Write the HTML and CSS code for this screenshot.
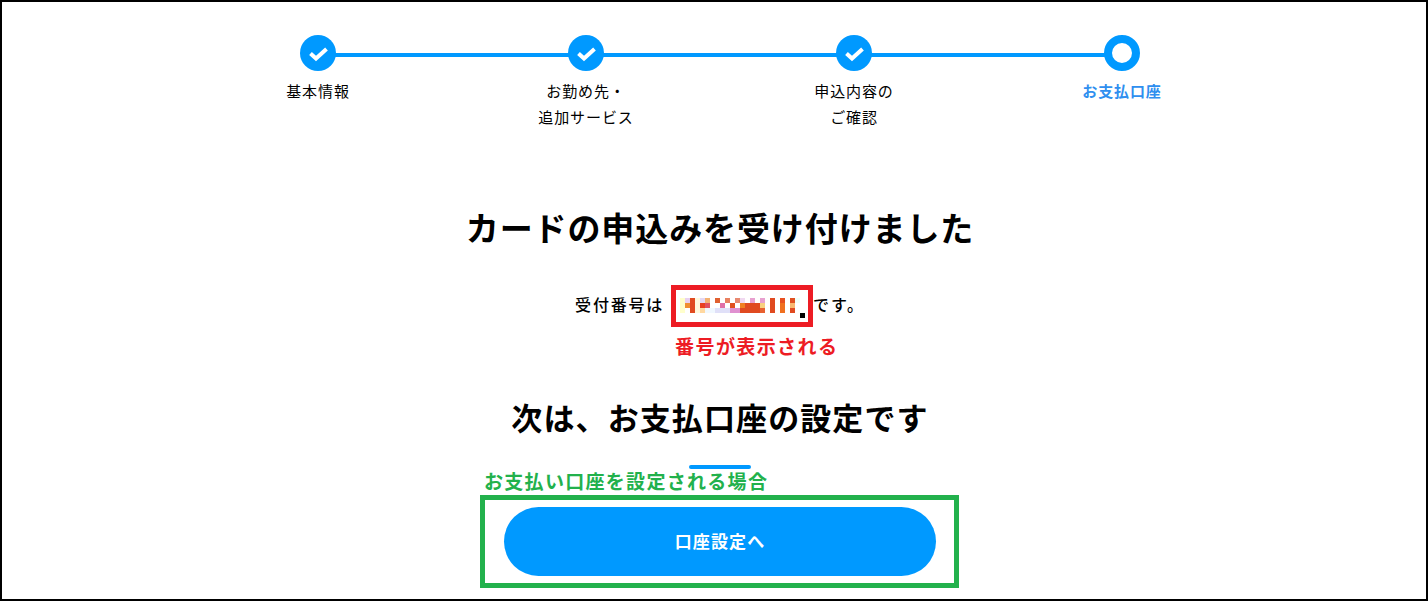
FILE: index.html
```html
<!DOCTYPE html>
<html lang="ja">

<head>
    <meta charset="UTF-8">
    <meta name="viewport" content="width=device-width, initial-scale=1.0">
    <title>カードの申込みを受け付けました</title>
    <link rel="stylesheet" href="styles.css">
</head>

<body>

    <div class="frame">
        <ol class="steps">
            <li class="step done">
                <span class="dot">
                    <svg viewBox="0 0 36 36" width="36" height="36"><path d="M10.500 18.500l5.500 5 10.500-9.500" /></svg>
                </span>
                <span class="step-label">基本情報</span>
            </li>
            <li class="step done">
                <span class="dot">
                    <svg viewBox="0 0 36 36" width="36" height="36"><path d="M10.500 18.500l5.500 5 10.500-9.500" /></svg>
                </span>
                <span class="step-label">お勤め先・<br>追加サービス</span>
            </li>
            <li class="step done">
                <span class="dot">
                    <svg viewBox="0 0 36 36" width="36" height="36"><path d="M10.500 18.500l5.500 5 10.500-9.500" /></svg>
                </span>
                <span class="step-label">申込内容の<br>ご確認</span>
            </li>
            <li class="step current">
                <span class="dot"></span>
                <span class="step-label">お支払口座</span>
            </li>
        </ol>

        <h1 class="title">カードの申込みを受け付けました</h1>

        <div class="receipt">
            <span class="receipt-text">受付番号は</span>
            <span class="number-box">
                <svg class="mosaic" viewBox="0 0 125 20" width="125" height="20" shape-rendering="crispEdges">
                    <rect x="0" y="0" width="5" height="15" fill="#ffffcc" />
                    <rect x="5" y="0" width="5" height="5" fill="#e8d0f0" />
                    <rect x="5" y="5" width="5" height="5" fill="#f09030" />
                    <rect x="10" y="0" width="5" height="15" fill="#e04a20" />
                    <rect x="15" y="0" width="5" height="15" fill="#fff8dc" />
                    <rect x="20" y="0" width="5" height="5" fill="#e4d8f4" />
                    <rect x="25" y="0" width="5" height="5" fill="#f4b070" />
                    <rect x="20" y="5" width="5" height="5" fill="#e84020" />
                    <rect x="25" y="5" width="5" height="5" fill="#e05060" />
                    <rect x="20" y="10" width="5" height="5" fill="#ffd8a0" />
                    <rect x="25" y="10" width="10" height="5" fill="#f0f8ff" />
                    <rect x="35" y="0" width="5" height="5" fill="#e06030" />
                    <rect x="45" y="0" width="5" height="5" fill="#e88060" />
                    <rect x="40" y="5" width="5" height="5" fill="#e070a8" />
                    <rect x="50" y="5" width="5" height="5" fill="#e05020" />
                    <rect x="35" y="10" width="15" height="5" fill="#e0e0f8" />
                    <rect x="50" y="10" width="15" height="5" fill="#e090d0" />
                    <rect x="55" y="0" width="5" height="5" fill="#e88870" />
                    <rect x="60" y="0" width="5" height="5" fill="#f0d8f0" />
                    <rect x="60" y="5" width="5" height="5" fill="#f08020" />
                    <rect x="65" y="5" width="15" height="10" fill="#e04a20" />
                    <rect x="80" y="10" width="5" height="5" fill="#e86030" />
                    <rect x="60" y="10" width="5" height="5" fill="#e04a20" />
                    <rect x="70" y="0" width="5" height="5" fill="#e8a0d0" />
                    <rect x="80" y="0" width="5" height="5" fill="#e8a0d0" />
                    <rect x="80" y="5" width="5" height="5" fill="#f8d080" />
                    <rect x="90" y="0" width="5" height="15" fill="#e04a20" />
                    <rect x="100" y="0" width="5" height="5" fill="#e85020" />
                    <rect x="100" y="5" width="5" height="10" fill="#f07020" />
                    <rect x="110" y="0" width="5" height="5" fill="#e05020" />
                    <rect x="110" y="5" width="5" height="5" fill="#f8b870" />
                    <rect x="110" y="10" width="5" height="5" fill="#e04a20" />
                    <rect x="115" y="0" width="5" height="5" fill="#f0fff8" />
                    <rect x="120" y="15" width="5" height="5" fill="#000000" />
                </svg>
                <span class="note-red">番号が表示される</span>
            </span>
            <span class="receipt-text">です。</span>
        </div>

        <h2 class="next">次は、お支払口座の設定です</h2>

        <div class="action">
            <p class="note-green">お支払い口座を設定される場合</p>
            <div class="action-box">
                <button class="btn">口座設定へ</button>
            </div>
        </div>
    </div>

</body>

</html>
```

FILE: styles.css
```css
* {
    box-sizing: border-box;
}

body {
    margin: 0;
    padding: 0;
    background-color: #fff;
    color: #000;
    font-family: "Noto Sans CJK JP", "Noto Sans", sans-serif;
}

.frame {
    height: 601px;
    padding: 33px 0 0 12px;
    border: 2px solid #000;
    overflow: hidden;
}

.steps {
    display: grid;
    grid-template-columns: repeat(4, 268px);
    justify-content: center;
    height: 95px;
    margin: 0;
    padding: 0;
    list-style: none;
}

.step {
    position: relative;
    display: flex;
    flex-direction: column;
    align-items: center;
}

.step:not(:last-child)::after {
    content: "";
    position: absolute;
    top: 18px;
    left: 50%;
    width: 100%;
    height: 4px;
    background-color: #0099ff;
}

.dot {
    position: relative;
    z-index: 1;
    width: 36px;
    height: 36px;
    border-radius: 50%;
    background-color: #0099ff;
}

.dot svg {
    display: block;
}

.dot path {
    fill: none;
    stroke: #fff;
    stroke-width: 4;
}

.current .dot {
    border: 8px solid #0099ff;
    background-color: #fff;
}

.step-label {
    margin-top: 7px;
    font-size: 15px;
    line-height: 26px;
    letter-spacing: 0.9px;
    text-align: center;
}

.current .step-label {
    color: #2f8fef;
    font-weight: 700;
}

.title {
    margin: 74px 0 0;
    font-size: 33px;
    font-weight: 700;
    line-height: 46px;
    letter-spacing: 0.9px;
    text-align: center;
}

.receipt {
    display: flex;
    justify-content: center;
    align-items: flex-start;
    margin-top: 35px;
}

.receipt-text {
    margin-top: 7px;
    font-size: 16px;
    font-weight: 500;
    line-height: 24px;
    letter-spacing: 1.8px;
}

.number-box {
    position: relative;
    width: 142px;
    height: 42px;
    margin-left: 7px;
    padding: 8px 0 0 4px;
    border: 5px solid #ed1c24;
}

.mosaic {
    display: block;
}

.note-red {
    position: absolute;
    top: 41px;
    left: -1px;
    color: #ed1c24;
    font-size: 19px;
    font-weight: 700;
    line-height: 30px;
    letter-spacing: 1.4px;
    white-space: nowrap;
}

.next {
    margin: 68px 0 0;
    font-size: 31px;
    font-weight: 700;
    line-height: 44px;
    letter-spacing: 1.1px;
    text-align: center;
}

.next::after {
    content: "";
    display: block;
    width: 62px;
    height: 4px;
    margin: 26px auto 0;
    border-radius: 2px;
    background-color: #0099ff;
}

.action {
    width: 480px;
    margin: -4px auto 0;
}

.note-green {
    margin: 0;
    padding: 1px 0 0 4px;
    height: 30px;
    color: #22b14c;
    font-size: 19px;
    font-weight: 700;
    line-height: 30px;
    letter-spacing: 1.3px;
    white-space: nowrap;
}

.action-box {
    width: 479px;
    height: 93px;
    padding: 7px 19px;
    border: 5px solid #22b14c;
}

.btn {
    display: block;
    width: 432px;
    height: 69px;
    padding: 0 0 2px;
    border: 0;
    border-radius: 35px;
    background-color: #0099ff;
    color: #fff;
    font-family: inherit;
    font-size: 17px;
    font-weight: 700;
    letter-spacing: 1.1px;
    cursor: pointer;
}
```
